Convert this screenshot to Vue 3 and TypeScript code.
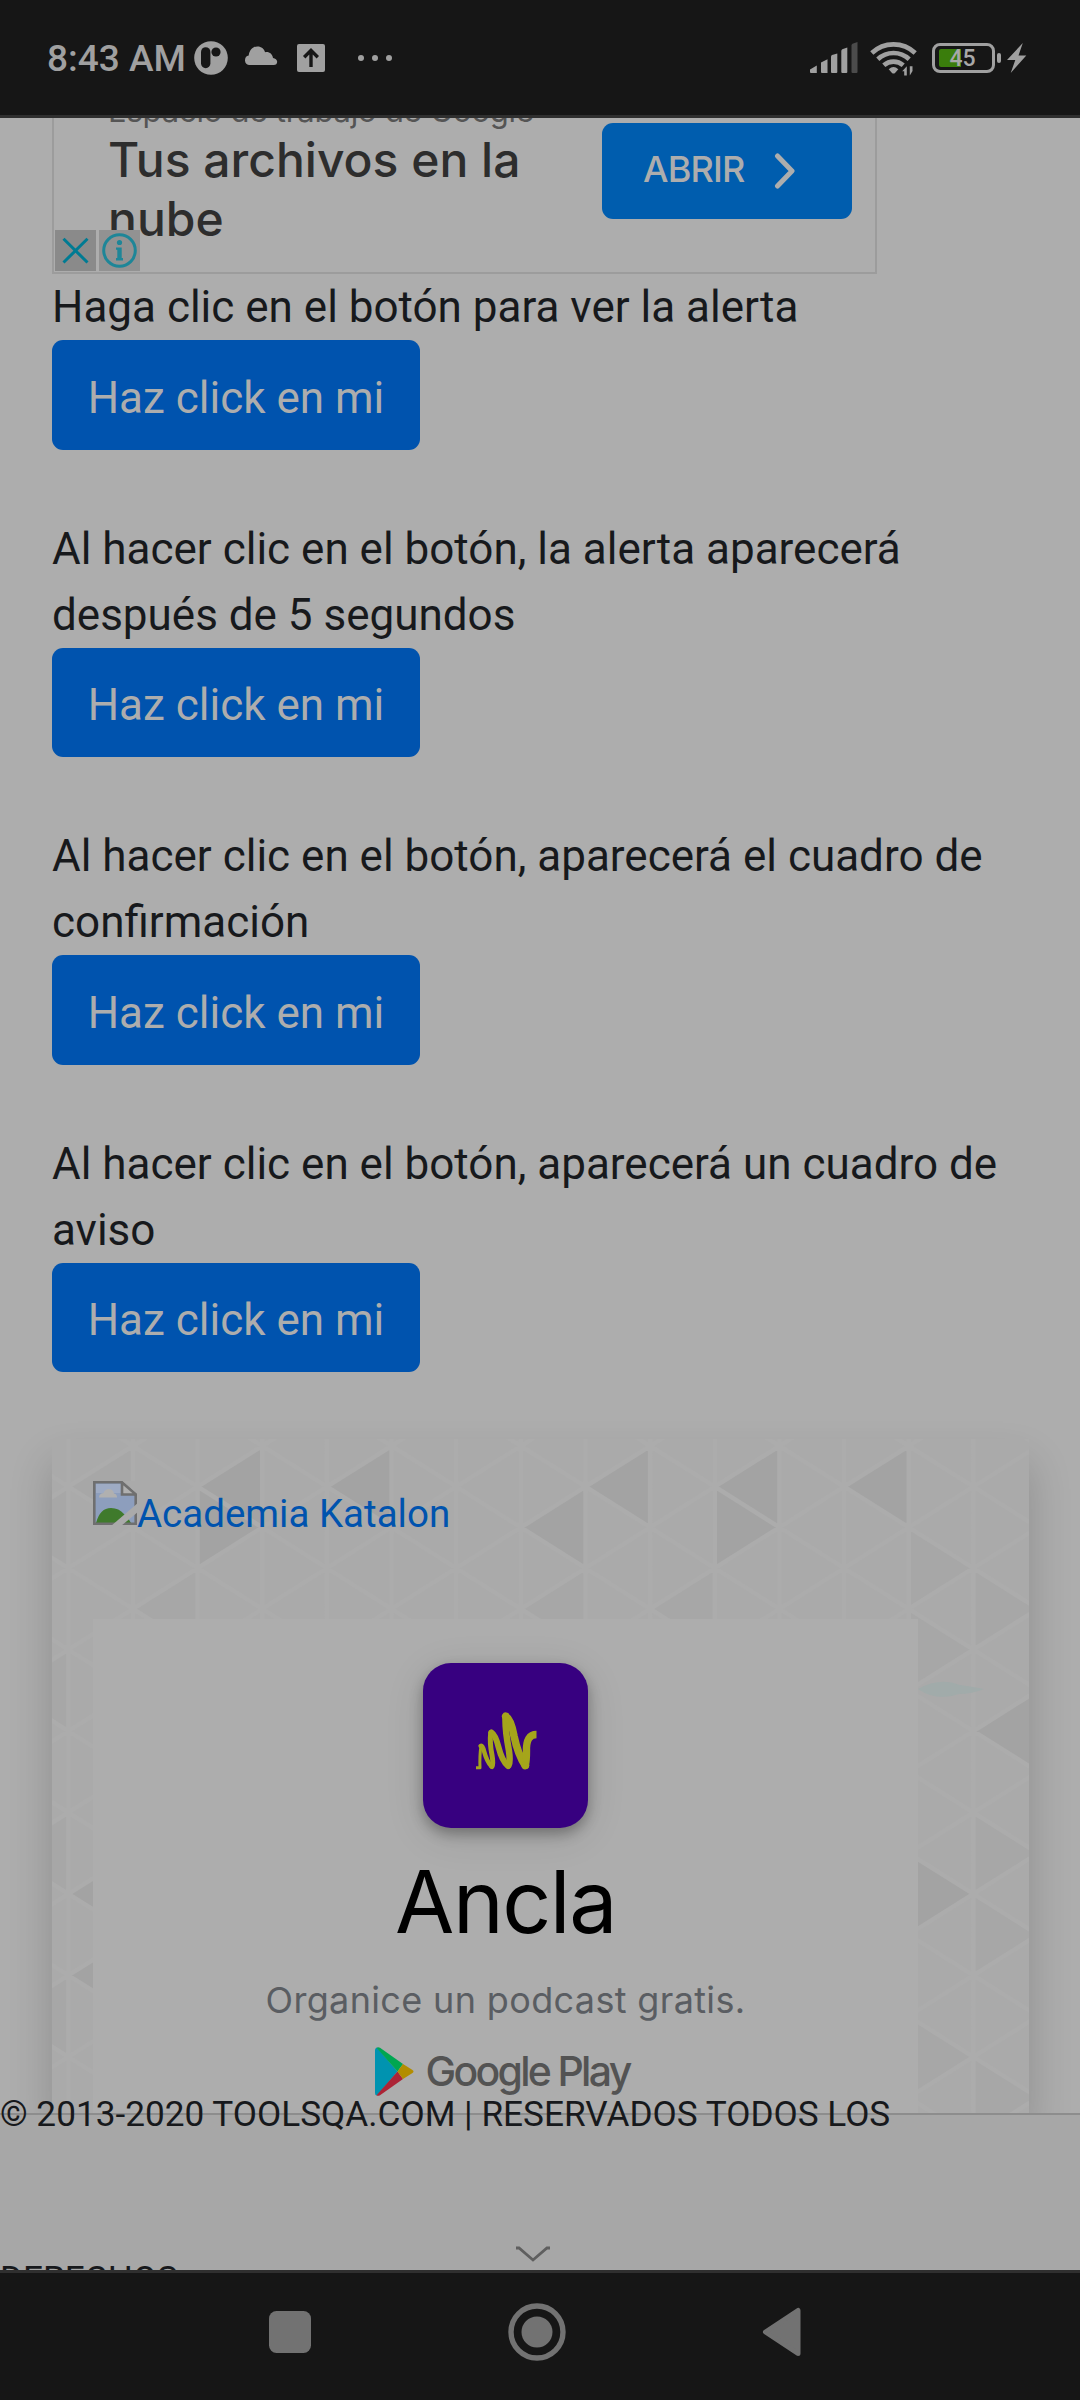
<script setup lang="ts">
interface AlertBlock {
  lines: string[]
}

const blocks: AlertBlock[] = [
  { lines: ['Haga clic en el botón para ver la alerta'] },
  { lines: ['Al hacer clic en el botón, la alerta aparecerá', 'después de 5 segundos'] },
  { lines: ['Al hacer clic en el botón, aparecerá el cuadro de', 'confirmación'] },
  { lines: ['Al hacer clic en el botón, aparecerá un cuadro de', 'aviso'] },
]

// Triangular lattice behind the banner card
const stepX = 64.65
const stepY = 81.45
const x0 = 16.3
const y0 = 47.7

const px = (c: number) => x0 + c * stepX
const py = (c: number, r: number) => y0 + r * stepY - (c % 2 !== 0 ? stepY / 2 : 0)

const lattice: string = (() => {
  const parts: string[] = []
  for (let c = -1; c <= 15; c++) {
    parts.push(`M${px(c)} 0V674`)
    for (let r = -1; r <= 9; r++) {
      parts.push(`M${px(c)} ${py(c, r)}L${px(c + 1)} ${py(c, r) - stepY / 2}`)
      parts.push(`M${px(c)} ${py(c, r)}L${px(c + 1)} ${py(c, r) + stepY / 2}`)
    }
  }
  return parts.join('')
})()

// Triangles by apex column, apex row and the side on which the base lies
const tri = (c: number, r: number, side: 1 | -1): string => {
  const bx = px(c + side)
  const y = py(c, r)
  return `M${px(c)} ${y}L${bx} ${y - stepY / 2}V${y + stepY / 2}Z`
}

const dark: string = [
  tri(2, 0, 1), tri(4, 0, 1), tri(8, 0, 1), tri(10, 0, 1), tri(12, 0, 1),
  tri(3, 1, -1), tri(11, 1, -1), tri(7, 1, 1), tri(14, 3, 1),
  tri(14, 5, -1), tri(0, 5, 1), tri(0, 6, 1),
].join('')

const mid: string = [
  tri(0, 0, 1), tri(15, 5, -1),
  tri(1, 2, 1), tri(9, 2, 1), tri(14, 1, -1), tri(15, 2, -1), tri(-1, 1, 1), tri(-1, 3, 1),
  tri(7, 2, 1), tri(14, 2, -1), tri(14, 7, -1), tri(-1, 7, 1),
  tri(15, 6, -1), tri(15, 8, -1), tri(-1, 5, 1),
].join('')
</script>

<template>
  <div class="screen">
    <header class="status">
      <span class="clock">8:43 AM</span>
      <svg class="i-app" width="34" height="34" viewBox="0 0 34 34">
        <circle cx="17" cy="17" r="16.8" fill="#a0a0a0" />
        <rect x="7" y="6.2" width="9.4" height="21" rx="4.7" fill="#161616" />
        <circle cx="22" cy="11" r="4.6" fill="#161616" />
      </svg>
      <svg class="i-cloud" width="34" height="20" viewBox="0 0 34 20">
        <path d="M5 19a4.8 4.8 0 0 1-.3-9.4C5.500 3.500 9 .5 13.500.5c4 0 6.500 2.300 7.600 5.700 4-.8 7.200 1.500 7.900 5.700 2.300.4 4.200 1.700 4.200 3.800 0 2-1.300 3.300-3.500 3.300z" fill="#a0a0a0" />
      </svg>
      <svg class="i-up" width="28" height="28" viewBox="0 0 28 28">
        <rect width="28" height="28" rx="2" fill="#a0a0a0" />
        <path d="M14 23V7M7.200 13.200 14 6.400l6.800 6.800" fill="none" stroke="#161616" stroke-width="3.400" />
      </svg>
      <svg class="i-dots" width="36" height="8" viewBox="0 0 36 8">
        <circle cx="4" cy="4" r="3" fill="#a0a0a0" />
        <circle cx="18" cy="4" r="3" fill="#a0a0a0" />
        <circle cx="32" cy="4" r="3" fill="#a0a0a0" />
      </svg>
      <span class="grow"></span>
      <svg class="i-signal" width="48" height="32" viewBox="0 0 48 32">
        <g fill="#a0a0a0">
          <path d="M0 27.500 6.800 23.500V31H1a1 1 0 0 1-1-1z" />
          <path d="M11 20.500 17.500 17.300V31H12a1 1 0 0 1-1-1z" />
          <path d="M21 14.500Q21 13.500 22 13L27.300 11.500V30a1 1 0 0 1-1 1H22a1 1 0 0 1-1-1z" />
          <path d="M31.300 9Q31.300 8 32.300 7.200L37.300 5.500V30a1 1 0 0 1-1 1h-4a1 1 0 0 1-1-1z" />
        </g>
        <path d="M41.500 3.500Q41.500 2.500 42.500 1.700L47.500 0V30a1 1 0 0 1-1 1h-4a1 1 0 0 1-1-1z" fill="#4b4b4b" />
      </svg>
      <svg class="i-wifi" width="48" height="36" viewBox="0 0 48 36">
        <g fill="none" stroke="#a0a0a0" stroke-width="4.600">
          <path d="M1.800 13A31.500 31.500 0 0 1 45.200 13" />
          <path d="M7.800 19.200A23 23 0 0 1 39.200 19.200" />
          <path d="M13.800 25.300A14.500 14.500 0 0 1 33.200 25.300" />
        </g>
        <path d="M18.700 29.300Q23.500 24.800 28.300 29.300L25 32.900Q23.500 34 22 32.900z" fill="#a0a0a0" />
        <path d="M32.200 31.200 36.800 26.200V35.500h-2.600v-4.300zM46 30.700h-3.300L39.800 35.500V26.200h2.700v4.500z" fill="#a0a0a0" />
      </svg>
      <span class="battery">
        <span class="level"></span>
        <span class="pct">45</span>
      </span>
      <span class="nub"></span>
      <svg class="i-bolt" width="20" height="30" viewBox="0 0 20 30">
        <path d="M15.800 0 0 17h8.300L3.700 30 19.300 12.500H11.500z" fill="#a0a0a0" />
      </svg>
    </header>

    <main class="page">
      <section class="top-ad">
        <div class="ad-copy">
          <div class="ad-sub"><span>Espacio de trabajo de Google</span></div>
          <div class="ad-title">Tus archivos en la</div>
          <div class="ad-title">nube</div>
        </div>
        <div class="ad-btn">
          <span>ABRIR</span>
          <svg width="22" height="36" viewBox="0 0 22 36">
            <path d="M3.500 3 18 18 3.500 33" fill="none" stroke="#adadad" stroke-width="5" stroke-linecap="round" stroke-linejoin="round" />
          </svg>
        </div>
        <div class="ad-badges">
          <svg width="41" height="41" viewBox="0 0 41 41">
            <rect width="41" height="41" fill="#8a8a8a" />
            <path d="M8.500 8.800 32.500 32.500M32.500 8.800 8.500 32.500" stroke="#007b93" stroke-width="3" />
          </svg>
          <svg width="41" height="41" viewBox="0 0 41 41">
            <rect width="41" height="41" fill="#929292" />
            <circle cx="20.500" cy="20.500" r="15.800" fill="none" stroke="#1e8698" stroke-width="3" />
            <circle cx="20.500" cy="12.500" r="2.600" fill="#1e8698" />
            <path d="M17 17.500h5.700V28H24v2.400h-7V28h1.300v-8.200H17z" fill="#1e8698" />
          </svg>
        </div>
      </section>

      <section v-for="(b, i) in blocks" :key="i" class="block">
        <p v-for="line in b.lines" :key="line">{{ line }}</p>
        <button type="button">Haz click en mi</button>
      </section>

      <section class="banner">
        <svg class="pattern" width="977" height="674" viewBox="0 0 977 674">
          <rect width="977" height="674" fill="#aaaaaa" />
          <path :d="mid" fill="#a7a7a7" />
          <path :d="dark" fill="#a3a3a3" />
          <path :d="lattice" fill="none" stroke="#acacac" stroke-width="4.500" />
          <path d="M866 250q22-12 42-4 14 2 24 4-12 5-25 5-22 8-41-5z" fill="#a1abaa" />
        </svg>
        <div class="banner-body">
          <a class="katalon">
            <svg width="44" height="44" viewBox="0 0 44 44">
              <path d="M1.300 1.300H28.500L42.700 14V42.700H1.300z" fill="#8d9ebd" />
              <path d="M3 3h26v9H3z" fill="#9eabc4" />
              <path d="M6 16.500q0-4 4.500-4.500 1.500-4 5.500-4t5 4.500q3 .5 3 4z" fill="#b0b0b0" />
              <path d="M3 42q4-15 15-15 8 0 13 6 5 4 7 9z" fill="#3f7a2c" />
              <path d="M1.300 42.700V1.300H28.500L42.700 14V42.700z" fill="none" stroke="#6f6f6f" stroke-width="2.600" />
              <path d="M29 1.500V13.500H43z" fill="#b0b0b0" stroke="#6f6f6f" stroke-width="2.600" />
              <path d="M45 22 18 45H28L45 31z" fill="#aaaaaa" />
              <path d="M31 0H45V12z" fill="#aaaaaa" />
            </svg>
            <span>Academia Katalon</span>
          </a>
          <div class="play-ad">
            <svg class="app-icon" width="165" height="165" viewBox="0 0 165 165">
              <g fill="none" stroke="#a5a51b" stroke-linecap="round" stroke-linejoin="round">
                <path d="M53 104.800H57Q56.500 92 58 83" stroke-width="3" stroke-linecap="butt" />
                <path d="M57.600 83Q59.500 82 61 88 64 99 68.500 103.500" stroke-width="4.500" />
                <path d="M69 103.500Q70.500 101 69 92 66.500 80 67.700 69.500" stroke-width="5" />
                <path d="M68.500 69.500Q72.500 72 75.500 84 79 98 85 103" stroke-width="6" />
                <path d="M85.500 102.500Q87.500 99 86 88 82 67 82.500 53.500" stroke-width="6.500" />
                <path d="M82.700 53.200Q88 56 91 73 95 92 102.300 102.500" stroke-width="7.600" />
                <path d="M102.300 102Q103.500 98 103.500 88 103 71.500 113.500 71.500" stroke-width="7.400" stroke-linecap="butt" />
                <circle cx="102.300" cy="102.200" r=".5" stroke-width="6.800" />
              </g>
            </svg>
            <div class="app-name">Ancla</div>
            <div class="app-tag">Organice un podcast gratis.</div>
            <div class="store">
              <svg width="40" height="49" viewBox="0 0 40 49">
                <path d="M2 .5Q0 1 0 3V46Q0 48.500 2 48.500L22.500 24.500z" fill="#0093b0" />
                <path d="M1.500.8Q3-.5 5 .8L28 17 22.500 24.500z" fill="#00a651" />
                <path d="M1.500 48.200Q3 49.500 5 48.200L28 32 22.500 24.500z" fill="#ac2436" />
                <path d="M28 17 37.500 23Q39.500 24.500 37.500 26L28 32 22.500 24.500z" fill="#b38d00" />
              </svg>
              <span>Google Play</span>
            </div>
          </div>
        </div>
      </section>

      <footer class="foot">
        <p>© 2013-2020 TOOLSQA.COM | RESERVADOS TODOS LOS<br />DERECHOS</p>
        <svg class="chev" width="38" height="18" viewBox="0 0 38 18">
          <path d="M2 2h3L19 14 33 2h3" fill="none" stroke="#5f5f5f" stroke-width="2.800" />
        </svg>
      </footer>
    </main>

    <nav class="nav">
      <svg class="n-sq" width="42" height="42" viewBox="0 0 42 42">
        <rect width="42" height="42" rx="7.500" fill="#727272" />
      </svg>
      <svg class="n-home" width="58" height="58" viewBox="0 0 58 58">
        <circle cx="29" cy="29" r="26" fill="none" stroke="#727272" stroke-width="5.400" />
        <circle cx="29" cy="29" r="15.500" fill="#727272" />
      </svg>
      <svg class="n-back" width="40" height="50" viewBox="0 0 40 50">
        <path d="M36 3.500V46.500L3.500 25z" fill="#727272" stroke="#727272" stroke-width="5" stroke-linejoin="round" />
      </svg>
    </nav>
  </div>
</template>

<style>
body {
  background: #adadad;
}
</style>

<style scoped>
.screen {
  width: 1080px;
  height: 2400px;
  display: flex;
  flex-direction: column;
  overflow: hidden;
  background: #adadad;
  font-family: Roboto, "Liberation Sans", sans-serif;
  color: #17191c;
}
.screen svg {
  display: block;
  flex: none;
}
p {
  margin: 0;
}
.status {
  flex: none;
  box-sizing: border-box;
  height: 118px;
  background: #161616;
  border-bottom: 3px solid #2f2f2f;
  display: flex;
  align-items: center;
  padding: 0 53px 0 47px;
}
.clock {
  width: 147px;
  font-size: 37px;
  font-weight: 500;
  line-height: 40px;
  color: #a0a0a0;
  white-space: nowrap;
  padding-top: 3px;
}
.i-cloud {
  margin: 0 0 4px 16px;
}
.i-up {
  margin-left: 19px;
}
.i-dots {
  margin-left: 32px;
}
.grow {
  flex: 1;
}
.i-wifi {
  margin: 1px 0 0 12px;
}
.battery {
  box-sizing: border-box;
  position: relative;
  width: 63px;
  height: 30px;
  border: 3px solid #a0a0a0;
  border-radius: 8px;
  margin-left: 14px;
  padding: 3px 4px;
}
.level {
  display: block;
  width: 22px;
  height: 18px;
  border-radius: 2px 0 0 2px;
  background: #3a7d0c;
}
.pct {
  position: absolute;
  left: 0;
  right: 2px;
  top: 0;
  text-align: center;
  font-size: 23px;
  line-height: 25px;
  font-weight: 500;
  color: #a8a8a8;
}
.nub {
  width: 4px;
  height: 10px;
  border-radius: 2px;
  background: #a0a0a0;
  margin-left: 2px;
}
.i-bolt {
  margin-left: 6px;
}
.page {
  flex: none;
  height: 2152px;
  overflow: hidden;
  position: relative;
}
.top-ad {
  position: relative;
  box-sizing: border-box;
  width: 825px;
  height: 156px;
  margin: 0 0 0.4px 52px;
  border: 2px solid #9c9c9c;
  border-top: 0;
  display: flex;
  justify-content: space-between;
  font-family: Inter, "Open Sans", sans-serif;
}
.ad-copy {
  padding-left: 54px;
  white-space: nowrap;
}
.ad-sub {
  height: 12px;
  display: flex;
  align-items: flex-end;
  font-size: 31px;
  line-height: 38px;
  color: #555;
  letter-spacing: -0.2px;
}
.ad-title {
  font-size: 48px;
  line-height: 59px;
  font-weight: 500;
  color: #2d2d2d;
  letter-spacing: 0;
}
.ad-btn {
  box-sizing: border-box;
  width: 250px;
  height: 96px;
  margin: 5px 23px 0 0;
  padding: 0 0 0 41px;
  border-radius: 11px;
  background: #005dae;
  color: #adadad;
  display: flex;
  align-items: center;
  font-size: 36px;
  font-weight: 500;
  letter-spacing: -0.8px;
}
.ad-btn span {
  width: 131px;
  margin-top: -5px;
}
.ad-badges {
  position: absolute;
  left: 1px;
  bottom: 1px;
  display: flex;
  gap: 3px;
}
.block {
  padding: 0 0 66px 52px;
  font-size: 44px;
  line-height: 66px;
  white-space: nowrap;
}
.block button {
  display: block;
  box-sizing: border-box;
  height: 109.5px;
  width: 368px;
  border: 0;
  border-radius: 11px;
  padding: 5px 0 0;
  background: #0053ae;
  color: #adadad;
  font: inherit;
}
.banner {
  position: relative;
  width: 977px;
  height: 674px;
  margin: 0.5px 0 0 52px;
  box-shadow: 0 24px 40px rgba(0, 0, 0, 0.18);
}
.pattern {
  position: absolute;
  inset: 0;
}
.banner-body {
  position: relative;
  padding: 42px 0 0 41px;
}
.katalon {
  display: flex;
  height: 138px;
  font-size: 38.5px;
  line-height: 58px;
  color: #0053ae;
}
.katalon span {
  margin: 4px 0 0;
}
.play-ad {
  width: 825px;
  height: 494px;
  background: #adadad;
  display: flex;
  flex-direction: column;
  align-items: center;
  font-family: Inter, "Open Sans", sans-serif;
  white-space: nowrap;
}
.app-icon {
  margin-top: 44px;
  border-radius: 28px;
  background: #370080;
  box-shadow: 0 6px 14px rgba(0, 0, 0, 0.3), 0 8px 40px rgba(0, 0, 0, 0.1);
}
.app-name {
  margin-top: 22px;
  font-size: 86px;
  line-height: 104px;
  color: #000;
  letter-spacing: -1.5px;
}
.app-tag {
  margin-top: 24px;
  font-size: 36px;
  line-height: 44px;
  color: #5a5d62;
  letter-spacing: 0.35px;
}
.store {
  margin: 25px 0 0 -6px;
  display: flex;
  align-items: center;
  font-size: 41px;
  line-height: 49px;
  font-weight: 500;
  color: #535353;
  letter-spacing: -2.7px;
}
.store span {
  margin-left: 10px;
}
.foot {
  position: relative;
  box-sizing: border-box;
  height: 165px;
  background: #a7a7a7;
  border-top: 2px solid #8d8d8d;
  z-index: 1;
}
.foot p {
  margin-top: -83px;
  font-size: 35.2px;
  line-height: 165px;
  white-space: nowrap;
}
.chev {
  position: absolute;
  left: 514px;
  top: 131px;
}
.nav {
  flex: none;
  box-sizing: border-box;
  height: 130px;
  background: #161616;
  border-top: 3px solid #2f2f2f;
  display: flex;
  align-items: center;
  padding: 0 0 9px 269px;
}
.n-home {
  margin-left: 197px;
}
.n-back {
  margin-left: 196px;
}
</style>
